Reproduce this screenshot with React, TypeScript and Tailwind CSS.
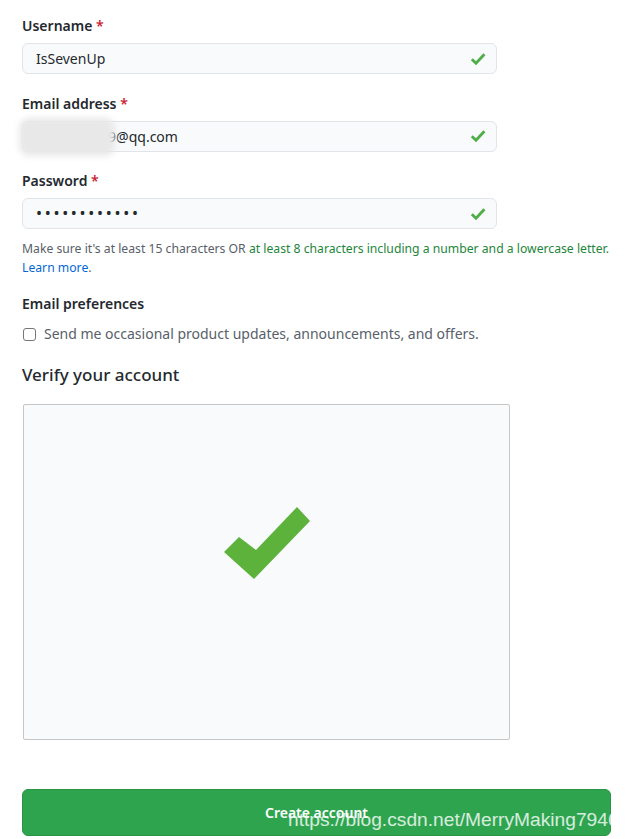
import React from "react";

function Check({ className = "" }: { className?: string }) {
  return (
    <svg viewBox="0 0 16 14" width="16" height="14" className={className} fill="none">
      <polyline points="1.8,7.2 6,11.2 14.4,2.2" stroke="currentColor" strokeWidth="2.8" strokeLinejoin="miter" />
    </svg>
  );
}

function Field({ label, children }: { label: string; children: React.ReactNode }) {
  return (
    <div>
      <label className="block text-[14px] leading-[20px] font-semibold text-[#24292e]">
        {label} <span className="text-[#cb2431]">*</span>
      </label>
      <div className="relative mt-[7px] flex h-[31px] w-[475px] items-center rounded-[6px] border border-[#e1e4e8] bg-[#f9fafb] pl-[13px] pr-[10px]">
        <div className="flex-1 text-[14px] text-[#24292e]">{children}</div>
        <Check className="text-[#4fae48]" />
      </div>
    </div>
  );
}

export default function App() {
  return (
    <div className="relative min-h-[839px] overflow-hidden bg-white px-[22px] pt-[16px]" style={{ fontFamily: '"Noto Sans", "Open Sans", sans-serif' }}>
      <div className="flex flex-col gap-[19.5px]">
        <Field label="Username">IsSevenUp</Field>
        <div className="relative">
          <Field label="Email address">
            <span className="text-transparent">123456789</span>9@qq.com
          </Field>
          <div className="absolute left-[-3px] top-[24px] h-[38px] w-[96px] rounded-[10px] bg-[#e8e8e8] blur-[3px]" />
        </div>
        <Field label="Password">
          <span className="text-[16px] leading-[20px] tracking-[2.7px]">••••••••••••</span>
        </Field>
      </div>
      <p className="mt-[10px] text-[12.2px] leading-[19px] text-[#586069]">
        Make sure it's at least 15 characters OR{" "}
        <span className="text-[#22863a]">at least 8 characters including a number and a lowercase letter.</span>
        <br />
        <a className="text-[#0366d6]">Learn more</a>.
      </p>
      <div className="mt-[17px] text-[14px] leading-[20px] font-semibold text-[#24292e]">Email preferences</div>
      <label className="mt-[10px] flex items-center gap-[8px] text-[14px] leading-[20px] text-[#586069]">
        <span className="ml-[1px] inline-block h-[13px] w-[13px] rounded-[3px] border border-[#767676] bg-white" />
        Send me occasional product updates, announcements, and offers.
      </label>
      <h2 className="mt-[19px] text-[17px] leading-[24px] font-medium text-[#24292e]">Verify your account</h2>
      <div className="mt-[17px] ml-[1px] flex h-[336px] w-[487px] justify-center rounded-[2px] border border-[#c6c6c6] bg-[#f9fafb] pt-[102px]">
        <svg viewBox="0 0 86 72" width="86" height="72">
          <polygon points="0,45 15,30 32,43 73,0 86,14 30,72" fill="#5cb23b" />
        </svg>
      </div>
      <button className="mt-[49px] flex h-[47px] w-[589px] items-center justify-center rounded-[6px] border border-[#2a9446] bg-[#2ea44f] text-[14px] font-semibold text-white">
        Create account
      </button>
      <div className="pointer-events-none absolute left-[288px] top-[808px] whitespace-nowrap text-[19.2px] leading-[24px] text-white/80" style={{ fontFamily: '"Liberation Sans", Arial, sans-serif' }}>
        https://blog.csdn.net/MerryMaking7946
      </div>
    </div>
  );
}
